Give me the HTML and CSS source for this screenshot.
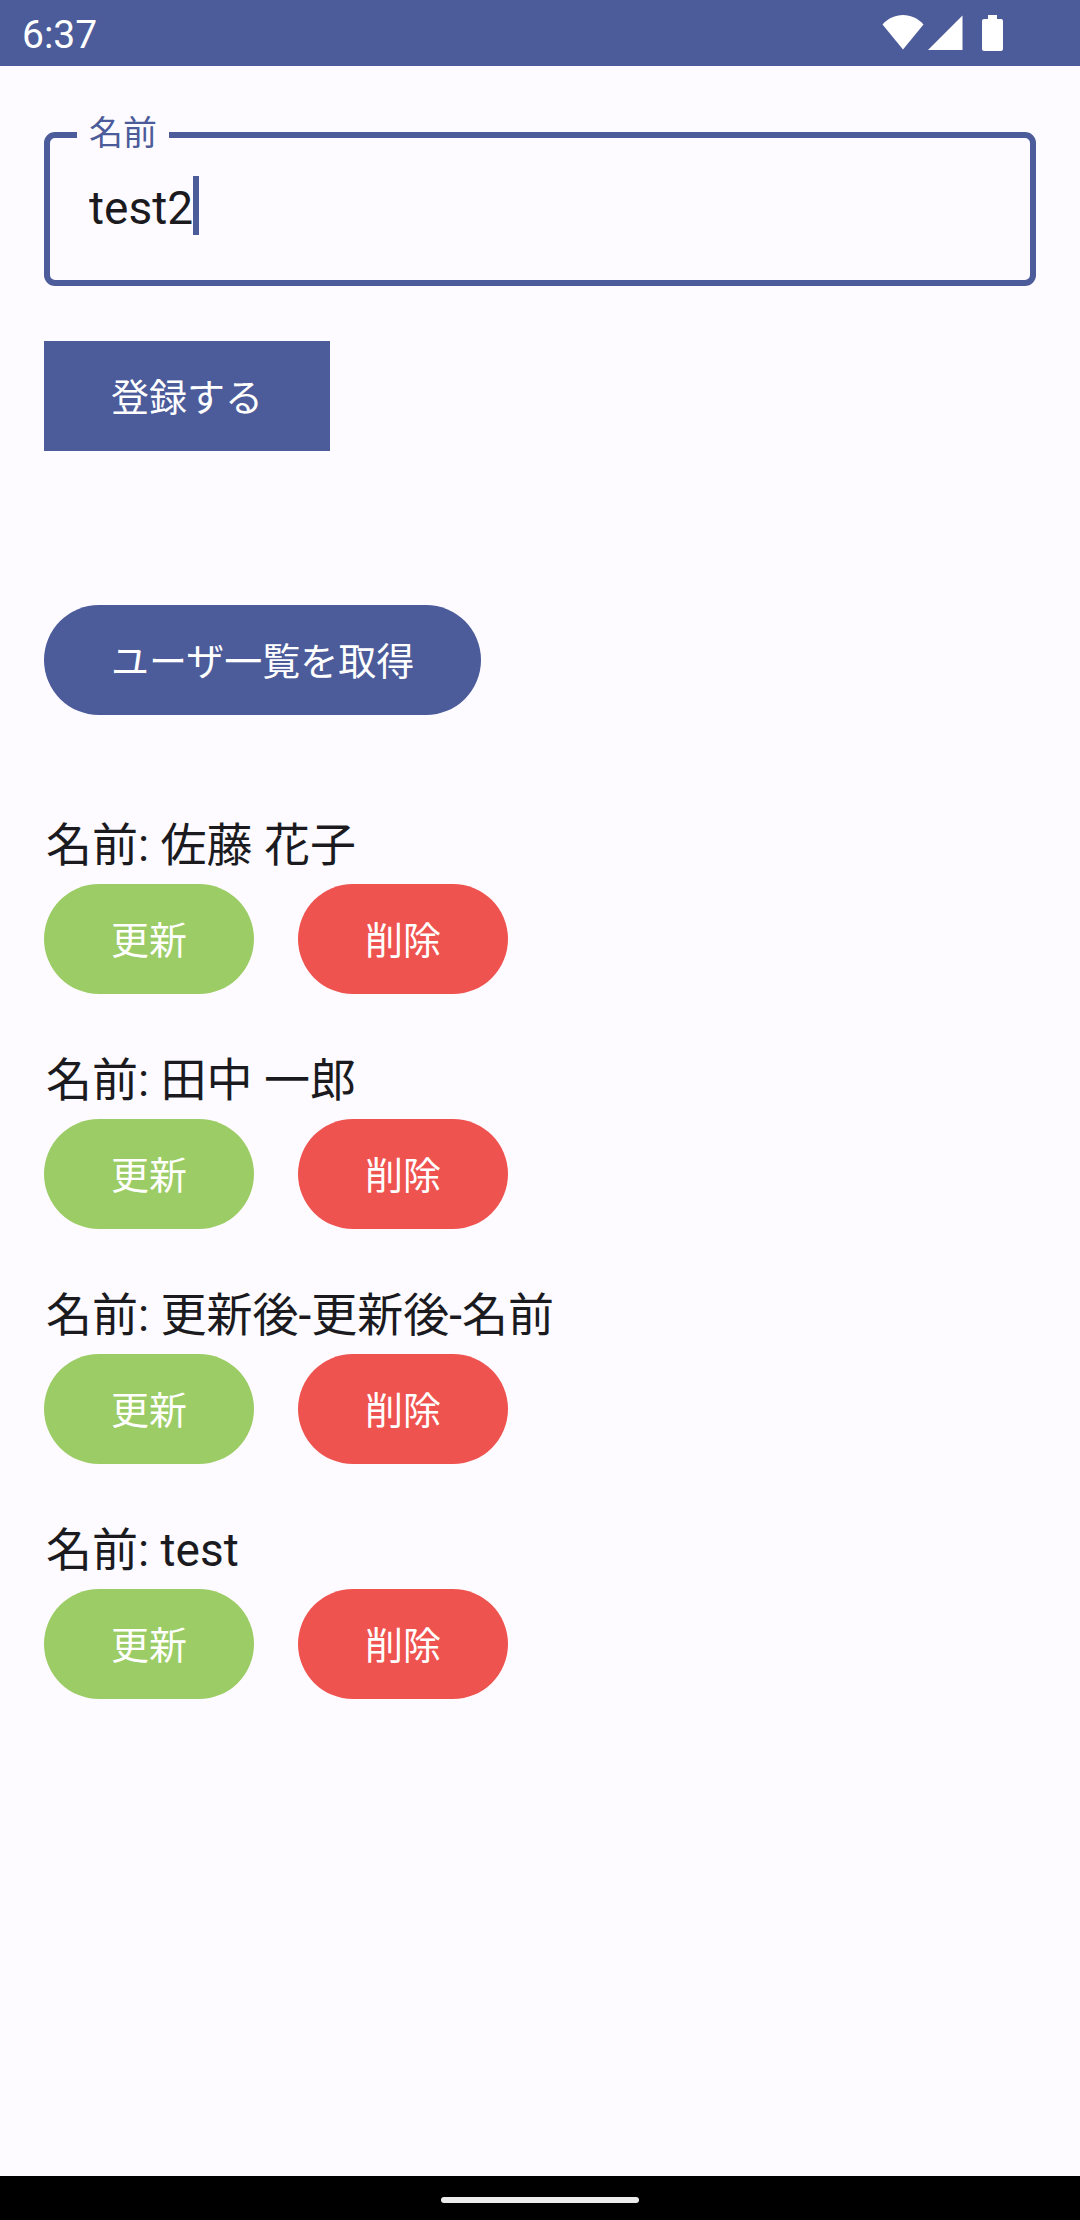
FILE: index.html
```html
<!DOCTYPE html>
<html lang="ja">
<head>
  <meta charset="utf-8">
  <meta name="viewport" content="width=device-width, initial-scale=1">
  <title>ユーザ一覧</title>
  <link rel="stylesheet" href="styles.css">
</head>
<body>
  <header class="status-bar">
    <time class="clock">6:37</time>
    <div class="status-icons">
      <svg class="icon-wifi" width="42" height="36" viewBox="0 0 42 36" aria-hidden="true">
        <path d="M0.5 9.5C6 3.500 13 0 21 0s15 3.500 20.500 9.500L21 34.500z"/>
      </svg>
      <svg class="icon-signal" width="35" height="36" viewBox="0 0 35 36" aria-hidden="true">
        <path d="M34.500 0.500V35H0z"/>
      </svg>
      <svg class="icon-battery" width="21" height="36" viewBox="0 0 21 36" aria-hidden="true">
        <path d="M6 0h9v4h4a2 2 0 0 1 2 2v28a2 2 0 0 1-2 2H2a2 2 0 0 1-2-2V6a2 2 0 0 1 2-2h4z"/>
      </svg>
    </div>
  </header>

  <main class="content">
    <form class="register-form" onsubmit="return false">
      <fieldset class="field">
        <legend class="field-legend"><label for="name">名前</label></legend>
        <div class="field-body">
          <input class="field-input" id="name" type="text" value="test2" size="5" autocomplete="off" spellcheck="false">
          <span class="caret"></span>
        </div>
      </fieldset>
      <button class="button button-square" type="submit">登録する</button>
    </form>

    <button class="button button-fetch" type="button">ユーザ一覧を取得</button>

    <ul class="user-list">
      <li class="user">
        <p class="user-name">名前: 佐藤 花子</p>
        <div class="user-actions">
          <button class="button button-update" type="button">更新</button>
          <button class="button button-delete" type="button">削除</button>
        </div>
      </li>
      <li class="user">
        <p class="user-name">名前: 田中 一郎</p>
        <div class="user-actions">
          <button class="button button-update" type="button">更新</button>
          <button class="button button-delete" type="button">削除</button>
        </div>
      </li>
      <li class="user">
        <p class="user-name">名前: 更新後-更新後-名前</p>
        <div class="user-actions">
          <button class="button button-update" type="button">更新</button>
          <button class="button button-delete" type="button">削除</button>
        </div>
      </li>
      <li class="user">
        <p class="user-name">名前: test</p>
        <div class="user-actions">
          <button class="button button-update" type="button">更新</button>
          <button class="button button-delete" type="button">削除</button>
        </div>
      </li>
    </ul>
  </main>

  <footer class="nav-bar"><span class="nav-handle"></span></footer>
</body>
</html>
```
FILE: styles.css
```css
:root {
  --primary: #4c5b99;
  --surface: #fdfbff;
  --text: #1b1b1f;
}

* {
  box-sizing: border-box;
}

body {
  display: flex;
  flex-direction: column;
  min-height: 100vh;
  margin: 0;
  background: var(--surface);
  color: var(--text);
  font-family: Roboto, "Noto Sans CJK JP", sans-serif;
}

.status-bar {
  display: flex;
  align-items: center;
  justify-content: space-between;
  height: 66px;
  padding: 0 77px 0 22px;
  background: var(--primary);
  color: #fff;
}

.clock {
  padding-top: 3px;
  font-size: 39px;
  line-height: 48px;
}

.status-icons {
  display: flex;
  gap: 4px;
  fill: #fff;
}

.icon-battery {
  margin-left: 15px;
}

.content {
  flex: 1;
  padding: 44px;
}

.register-form {
  display: flex;
  flex-direction: column;
  align-items: flex-start;
  gap: 55px;
}

.field {
  width: 100%;
  min-width: 0;
  margin: 0;
  padding: 0 27px;
  border: 6px solid var(--primary);
  border-radius: 11px;
}

.field-legend {
  padding: 0 12px 4px;
  color: var(--primary);
  font-size: 34px;
  line-height: 46px;
}

.field-body {
  display: flex;
  align-items: center;
  padding: 16px 12px 45px;
}

.field-input {
  field-sizing: content;
  height: 59px;
  padding: 4px 0 0;
  border: 0;
  outline: 0;
  background: transparent;
  color: inherit;
  font: inherit;
  font-size: 46px;
  caret-color: transparent;
}

.caret {
  width: 6px;
  height: 59px;
  background: var(--primary);
}

.button {
  height: 110px;
  padding: 0 67px 4px;
  border: 0;
  border-radius: 55px;
  background: var(--primary);
  color: #fff;
  font: inherit;
  font-size: 38px;
  white-space: nowrap;
}

.button-square {
  border-radius: 0;
}

.button-fetch {
  display: block;
  margin-top: 154px;
}

.user-list {
  display: flex;
  flex-direction: column;
  gap: 59px;
  margin: 103px 0 0;
  padding: 0;
  list-style: none;
}

.user-name {
  margin: 0;
  padding: 0 2px 12px;
  font-size: 46px;
  line-height: 54px;
}

.user-actions {
  display: flex;
  gap: 44px;
}

.button-update {
  background: #9ccc65;
}

.button-delete {
  background: #ef5350;
}

.nav-bar {
  display: flex;
  align-items: center;
  justify-content: center;
  height: 44px;
  padding-top: 4px;
  background: #000;
}

.nav-handle {
  width: 198px;
  height: 6px;
  border-radius: 3px;
  background: #ececec;
}
```
